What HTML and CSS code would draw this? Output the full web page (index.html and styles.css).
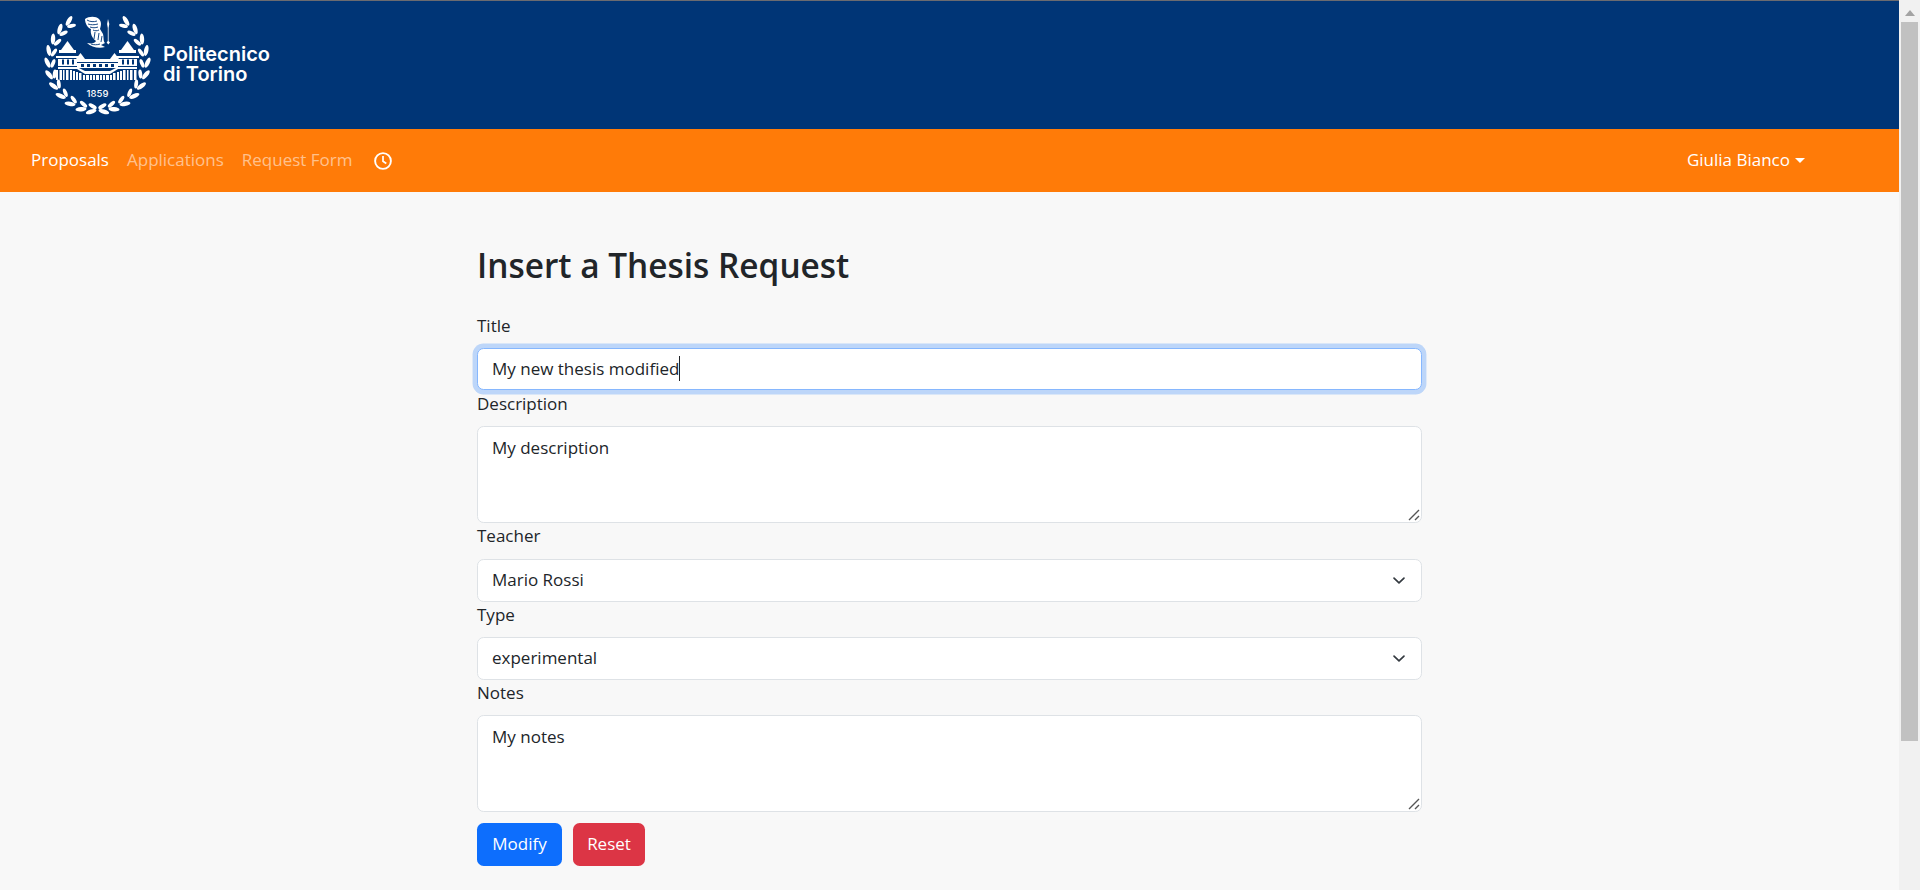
FILE: index.html
```html
<!DOCTYPE html>
<html lang="en">
<head>
<meta charset="utf-8">
<title>Insert a Thesis Request</title>
<link rel="stylesheet" href="styles.css">
</head>
<body>
<div class="shell">
  <div class="page">
    <header class="brand">
      <svg class="crest" width="116" height="104" viewBox="0 0 116 104" aria-hidden="true">
        <defs>
          <g id="pair">
            <ellipse cx="-2" cy="-50" rx="5.500" ry="2.200" transform="rotate(22 -2 -50)"/>
            <ellipse cx="-1" cy="-44.500" rx="4.500" ry="1.900" transform="rotate(-24 -1 -44.500)"/>
          </g>
          <g id="side">
            <use href="#pair" transform="rotate(37)"/>
            <use href="#pair" transform="rotate(51)"/>
            <use href="#pair" transform="rotate(65)"/>
            <use href="#pair" transform="rotate(79)"/>
            <use href="#pair" transform="rotate(93)"/>
            <use href="#pair" transform="rotate(107)"/>
            <use href="#pair" transform="rotate(121)"/>
            <use href="#pair" transform="rotate(135)"/>
            <use href="#pair" transform="rotate(149)"/>
            <use href="#pair" transform="rotate(163)"/>
            <use href="#pair" transform="rotate(175)"/>
          </g>
        </defs>
        <g class="ink" transform="translate(58.500 46)">
          <use href="#side"/>
          <use href="#side" transform="scale(-1 1)"/>
        </g>
        <path class="ink" d="M46 3C50 0 57 0 60 3c3 3 2 7 1 10l3 5c1 4 0 7 2 9l-4 2 4 2c-6 2-14 0-18-4 5 1 8 0 9-2-4-3-6-8-5-12-3-1-6-5-6-10z"/>
        <path class="wash-line" d="M48 4c3 2 7 2 10 1M49 8c3 1 6 1 10 0M51 11c3 1 5 1 8 0M54 14c2 1 4 1 6 0M56 16l-1 7M60 17l-1 7M63 20l-1 6M52 28c3 1 6 1 9 0"/>
        <path class="ink" d="M69 3l1.300 5-.7 4v13l1.400 1.500-1.700 2-1.700-2 1.200-1.500V12l-.7-4z"/>
        <g class="ink" transform="translate(0 4)">
          <polygon points="28.500,21 22,30 35,30"/>
          <polygon points="88.500,21 82,30 95,30"/>
          <polygon points="41.500,33 37,39 46,39"/>
          <polygon points="75.500,33 71,39 80,39"/>
          <rect x="20" y="30" width="17" height="3"/>
          <rect x="80" y="30" width="17" height="3"/>
          <rect x="17" y="36" width="23" height="2"/>
          <rect x="77" y="36" width="23" height="2"/>
          <rect x="19" y="39" width="19" height="7"/>
          <rect x="79" y="39" width="19" height="7"/>
          <rect x="37" y="39" width="43" height="3"/>
          <rect x="38" y="43" width="41" height="5"/>
          <polygon points="19,47 38,47 46,51 71,51 79,47 98,47 98,49 79,49 71,54 46,54 38,49 19,49"/>
          <rect x="17" y="50" width="2" height="10"/><rect x="20.500" y="50" width="2.500" height="10"/><rect x="24" y="50" width="1.500" height="10"/><rect x="27" y="50" width="2.500" height="10"/><rect x="31" y="50" width="2" height="10"/><rect x="34" y="51" width="2" height="9"/><rect x="37" y="52" width="2" height="8"/><rect x="40" y="53" width="2.500" height="7"/><rect x="44" y="55" width="2" height="5"/><rect x="47" y="55" width="3" height="5"/><rect x="51" y="55" width="2" height="5"/><rect x="54" y="55" width="2" height="5"/><rect x="57" y="55" width="3" height="5"/><rect x="61" y="55" width="2" height="5"/><rect x="64" y="55" width="2" height="5"/><rect x="67" y="55" width="3" height="5"/><rect x="71" y="55" width="2" height="5"/><rect x="74" y="53" width="2.500" height="7"/><rect x="78" y="52" width="2" height="8"/><rect x="81" y="51" width="2" height="9"/><rect x="84" y="50" width="2.500" height="10"/><rect x="88" y="50" width="1.500" height="10"/><rect x="91" y="50" width="2.500" height="10"/><rect x="95" y="50" width="2.500" height="10"/>
        </g>
        <g class="wash" transform="translate(0 4)">
          <rect x="23" y="39.500" width="2" height="5"/><rect x="28" y="39.500" width="2" height="5"/><rect x="33" y="39.500" width="2" height="5"/>
          <rect x="83" y="39.500" width="2" height="5"/><rect x="88" y="39.500" width="2" height="5"/><rect x="93" y="39.500" width="2" height="5"/>
          <rect x="42" y="44" width="3" height="3"/><rect x="48" y="44" width="3" height="3"/><rect x="54" y="44" width="3" height="3"/><rect x="60" y="44" width="3" height="3"/><rect x="66" y="44" width="3" height="3"/><rect x="72" y="44" width="3" height="3"/>
        </g>
        <text class="year" x="58.500" y="80.500">1859</text>
      </svg>
      <div class="wordmark">Politecnico<br>di Torino</div>
    </header>

    <nav class="menu">
      <a class="menu-link is-active" href="#">Proposals</a>
      <a class="menu-link" href="#">Applications</a>
      <a class="menu-link" href="#">Request Form</a>
      <svg class="clock" width="18" height="18" viewBox="0 0 18 18" aria-hidden="true">
        <circle cx="9" cy="9" r="7.900" fill="none" stroke="#fff" stroke-width="1.900"/>
        <path d="M9 4v5.300l3.300 2.200" fill="none" stroke="#fff" stroke-width="1.700"/>
      </svg>
      <a class="menu-user" href="#">Giulia Bianco<span class="caret"></span></a>
    </nav>

    <main class="content">
      <form class="form">
        <h1 class="title">Insert a Thesis Request</h1>
        <label class="label">Title</label>
        <div class="field is-focused">My new thesis modified<span class="cursor"></span></div>
        <label class="label">Description</label>
        <textarea class="field area area-lg">My description</textarea>
        <label class="label">Teacher</label>
        <select class="field pick"><option>Mario Rossi</option></select>
        <label class="label">Type</label>
        <select class="field pick"><option>experimental</option></select>
        <label class="label">Notes</label>
        <textarea class="field area">My notes</textarea>
        <div class="actions">
          <button class="btn btn-blue" type="button">Modify</button>
          <button class="btn btn-red" type="button">Reset</button>
        </div>
      </form>
    </main>
  </div>

  <aside class="scrollbar" aria-hidden="true">
    <div class="arrow"></div>
    <div class="thumb"></div>
  </aside>
</div>
</body>
</html>
```

FILE: styles.css
```css
* { box-sizing: border-box; }
html, body { margin: 0; height: 100%; overflow: hidden; }
body {
  font-family: "Open Sans", "Noto Sans", sans-serif;
  font-size: 17px;
  line-height: 26.4px;
  color: #212529;
  background: #f8f8f8;
}
.shell { display: flex; height: 890px; }
.page { flex: 1; min-width: 0; }

.brand {
  height: 129px;
  background: #003576;
  border-top: 1px solid #6b6b70;
  display: flex;
  align-items: flex-start;
  padding: 15px 0 0 39px;
}
.crest { display: block; flex: none; }
.ink { fill: #fff; }
.wash { fill: #003576; }
.wash-line { fill: none; stroke: #003576; stroke-width: .9; }
.year { fill: #fff; font: 500 9.500px "Inter", sans-serif; text-anchor: middle; }
.wordmark {
  margin: 28px 0 0 8px;
  color: #fff;
  font: 600 20px/20px "Inter", sans-serif;
}

.menu {
  height: 63px;
  background: #ff7b08;
  display: flex;
  align-items: center;
  padding: 0 0 0 31px;
}
.menu-link { color: rgba(255, 255, 255, .55); text-decoration: none; margin-right: 18px; }
.menu-link.is-active { color: #fff; }
.clock { margin-left: 3px; }
.menu-user {
  margin-left: auto;
  margin-right: 94px;
  color: #fff;
  text-decoration: none;
}
.caret {
  display: inline-block;
  margin-left: 5px;
  vertical-align: 3px;
  border-top: 5px solid #fff;
  border-left: 5px solid transparent;
  border-right: 5px solid transparent;
}

.content { padding-top: 52px; }
.form { width: 945px; margin: 0 auto; }
.title { margin: 0 0 27px; font-size: 33.4px; line-height: 42px; font-weight: 600; }
.label { display: block; margin-bottom: 8.8px; }
.field {
  display: block;
  width: 100%;
  height: 42px;
  padding: 6px 14px;
  font: inherit;
  color: #212529;
  background-color: #fff;
  border: 1px solid #dee2e6;
  border-radius: 6.6px;
  outline: 0;
  line-height: 28px;
}
.is-focused {
  margin-bottom: 1px;
  border-color: #86b7fe;
  box-shadow: 0 0 0 4.4px rgba(13, 110, 253, .25);
}
.cursor {
  display: inline-block;
  width: 1px;
  height: 25px;
  background: #212529;
  vertical-align: -6px;
}
.area { height: 97px; padding-top: 7px; resize: vertical; }
.area::-webkit-resizer {
  background: url("data:image/svg+xml,%3csvg xmlns='http://www.w3.org/2000/svg' width='15' height='15'%3e%3cpath d='M3 13 13 3M9 13l4-4' stroke='%23555' stroke-width='1.400' fill='none'/%3e%3c/svg%3e") no-repeat center;
}
.pick {
  height: 43px;
  appearance: none;
  background-image: url("data:image/svg+xml,%3csvg xmlns='http://www.w3.org/2000/svg' viewBox='0 0 16 16'%3e%3cpath fill='none' stroke='%23343a40' stroke-linecap='round' stroke-linejoin='round' stroke-width='2' d='m2 5 6 6 6-6'/%3e%3c/svg%3e");
  background-repeat: no-repeat;
  background-position: right 13px center;
  background-size: 17.6px 13px;
}
.actions { display: flex; gap: 11px; margin-top: 11px; }
.btn {
  height: 43px;
  padding: 0;
  font: inherit;
  color: #fff;
  border: 0;
  border-radius: 6.6px;
}
.btn-blue { width: 85px; background: #0d6efd; }
.btn-red { width: 72px; background: #dc3545; }

.scrollbar {
  width: 21px;
  flex: none;
  background: #f1f1f1;
  padding: 1px 2px 0;
}
.arrow {
  width: 0;
  margin: 9px auto 6px;
  border-bottom: 6px solid #a3a3a3;
  border-left: 5px solid transparent;
  border-right: 5px solid transparent;
}
.thumb { height: 719px; background: #c1c1c1; }
```
